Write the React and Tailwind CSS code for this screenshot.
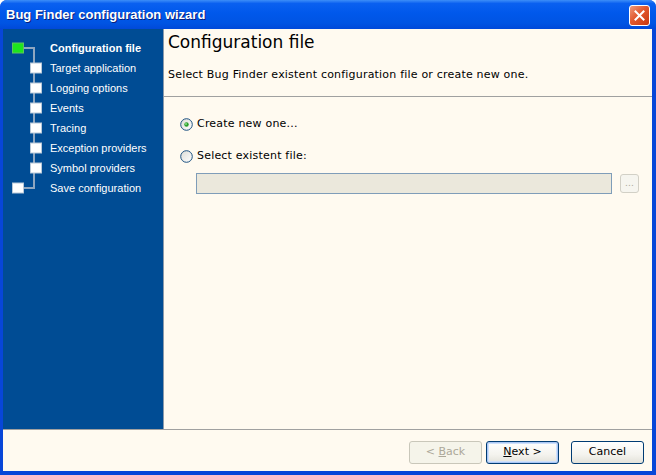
import React from 'react'

const steps = [
    { label: 'Configuration file', active: true },
    { label: 'Target application' },
    { label: 'Logging options' },
    { label: 'Events' },
    { label: 'Tracing' },
    { label: 'Exception providers' },
    { label: 'Symbol providers' },
    { label: 'Save configuration' },
]

const StepTree = () => (
    <svg width="47" height="160" className="shrink-0">
        {/* connectors */}
        <rect x="30" y="10" width="2" height="140" fill="#8ea6c0" />
        <rect x="21" y="9" width="11" height="2" fill="#8ea6c0" />
        <rect x="21" y="149" width="11" height="2" fill="#8ea6c0" />
        {steps.map((s, i) => {
            const cy = 10 + i * 20
            const first = i === 0
            const last = i === steps.length - 1
            const x = first || last ? 9 : 27
            return (
                <rect
                    key={i}
                    x={x + 0.5}
                    y={cy - 5}
                    width="11"
                    height="10"
                    fill={first ? '#1ee51e' : '#ffffff'}
                    stroke={first ? '#5fc45f' : '#b8c8d8'}
                    strokeWidth="1"
                />
            )
        })}
    </svg>
)

const Radio = ({ checked }) => (
    <svg width="13" height="13" className="shrink-0">
        <defs>
            <linearGradient id={checked ? 'rg1' : 'rg2'} x1="0" y1="0" x2="1" y2="1">
                <stop offset="0%" stopColor="#dcdcd6" />
                <stop offset="100%" stopColor="#ffffff" />
            </linearGradient>
        </defs>
        <circle cx="6.5" cy="6.5" r="5.8" fill={`url(#${checked ? 'rg1' : 'rg2'})`} stroke="#1c5180" strokeWidth="1" />
        {checked && <circle cx="6.5" cy="6.5" r="2.2" fill="#2ba02b" />}
        {checked && <circle cx="6" cy="6" r="0.9" fill="#8ee08e" />}
    </svg>
)

const XpButton = ({ children, disabled, isDefault }) => (
    <button
        disabled={disabled}
        className={`w-[73px] h-[23px] rounded-[3px] border text-[11px] font-['DejaVu_Sans',sans-serif] flex items-center justify-center ${disabled
            ? 'border-[#c9c7ba] bg-[#f5f4ea] text-[#aca899]'
            : 'border-[#003c74] bg-[linear-gradient(to_bottom,#ffffff_0%,#f4f3ee_60%,#e3e2da_100%)] text-black'
            } ${isDefault ? 'shadow-[inset_0_0_0_1px_#a9c6f4,inset_0_0_0_2px_#cee0fb]' : ''}`}
    >
        {children}
    </button>
)

export default function App() {
    return (
        <div className="w-[656px] h-[475px] flex flex-col bg-[#0846d8] rounded-t-[7px] overflow-hidden">
            {/* Title bar */}
            <div className="h-[29px] shrink-0 flex items-center justify-between pl-[6px] pr-[6px] bg-[linear-gradient(to_bottom,#3d8ef8_0%,#0a60f0_12%,#0058eb_45%,#0054e3_80%,#0049d9_100%)]">
                <span className="text-white text-[13px] font-bold font-['Liberation_Sans',sans-serif] [text-shadow:1px_1px_0_#0a1f7a]">
                    Bug Finder configuration wizard
                </span>
                <div className="w-[21px] h-[21px] mt-[1px] rounded-[3px] border border-white bg-[linear-gradient(135deg,#ee9a7c_0%,#e2582e_45%,#c8380f_100%)] flex items-center justify-center">
                    <svg width="11" height="11" viewBox="0 0 11 11">
                        <path d="M1.5 1.5 L9.5 9.5 M9.5 1.5 L1.5 9.5" stroke="#ffffff" strokeWidth="2" strokeLinecap="square" />
                    </svg>
                </div>
            </div>

            {/* Client */}
            <div className="flex-1 flex flex-col ml-[3px] mr-[4px] mb-[4px] bg-[#fffaf0]">
                <div className="flex-1 flex min-h-0">
                    {/* Steps panel */}
                    <div className="w-[161px] shrink-0 bg-[#004c94] border-r border-[#8b9aab] flex pt-[9px] font-['Liberation_Sans',sans-serif] text-[11px] text-white">
                        <StepTree />
                        <div className="flex flex-col">
                            {steps.map((s, i) => (
                                <div key={i} className={`h-[20px] leading-[20px] ${s.active ? 'font-bold' : ''}`}>
                                    {s.label}
                                </div>
                            ))}
                        </div>
                    </div>

                    {/* Page */}
                    <div className="flex-1 flex flex-col font-['DejaVu_Sans',sans-serif] text-black">
                        <div className="h-[68px] shrink-0 border-b border-[#a0a0a0] pl-[4px] pt-[3px]">
                            <div className="text-[17px] leading-[20px]">Configuration file</div>
                            <div className="text-[11px] leading-[13px] mt-[16px] tracking-[0.2px]">
                                Select Bug Finder existent configuration file or create new one.
                            </div>
                        </div>

                        <div className="pl-[16px] pr-[13px] pt-[21px] text-[11px] tracking-[0.2px]">
                            <div className="flex items-center gap-[4px] h-[13px]">
                                <Radio checked />
                                <span>Create new one...</span>
                            </div>
                            <div className="flex items-center gap-[4px] h-[13px] mt-[19px]">
                                <Radio />
                                <span>Select existent file:</span>
                            </div>
                            <div className="flex items-center gap-[8px] mt-[10px] pl-[16px]">
                                <div className="flex-1 h-[21px] bg-[#ebe8dc] border border-[#7f9db9]" />
                                <div className="w-[19px] h-[19px] rounded-[3px] border border-[#d2d0c6] bg-[#f6f5ef] text-[#aca899] text-[9px] flex items-center justify-center leading-none">
                                    ...
                                </div>
                            </div>
                        </div>
                    </div>
                </div>

                {/* Buttons */}
                <div className="h-[42px] shrink-0 border-t border-[#a0a0a0] flex items-start justify-end pt-[11px] pr-[8px]">
                    <XpButton disabled>
                        <span>&lt; <u>B</u>ack</span>
                    </XpButton>
                    <div className="w-[4px]" />
                    <XpButton isDefault>
                        <span><u>N</u>ext &gt;</span>
                    </XpButton>
                    <div className="w-[12px]" />
                    <XpButton>Cancel</XpButton>
                </div>
            </div>
        </div>
    )
}
